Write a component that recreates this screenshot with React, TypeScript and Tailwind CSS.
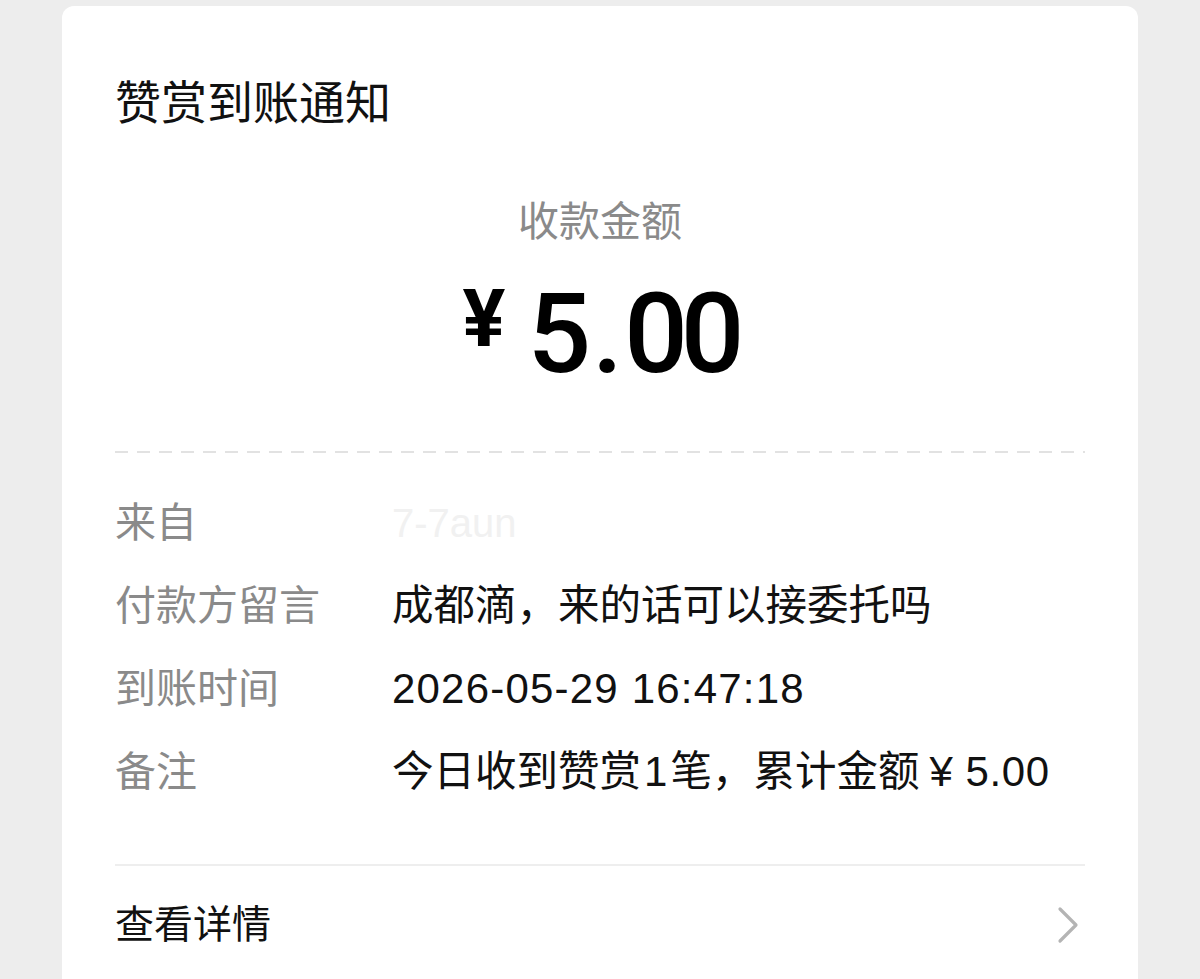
import React from "react";

const cjk = "font-['Liberation_Sans','Noto_Sans_CJK_SC',sans-serif]";

function Row({ label, children }: { label: string; children: React.ReactNode }) {
  return (
    <div className="flex h-[83px] items-center">
      <div className="w-[277px] shrink-0 text-[41px] leading-[50px] text-[#8a8a8a]">{label}</div>
      <div className="text-[41.5px] leading-[50px] text-[#111111] whitespace-nowrap">{children}</div>
    </div>
  );
}

export default function App() {
  return (
    <div className={`min-h-[979px] bg-[#ededed] pt-[6px] px-[62px] ${cjk}`}>
      <div className="min-h-[1000px] rounded-[12px] bg-white px-[53px] pt-[69px] pb-[40px]">
        <div className="h-[56px] text-[46px] leading-[56px] text-[#111111]">赞赏到账通知</div>

        <div className="mt-[67px] text-center text-[41px] leading-[48px] text-[#8a8a8a]">收款金额</div>

        <div className="mt-[32px] flex items-start justify-center text-black">
          <span className="font-['Roboto',sans-serif] text-[80px] font-bold leading-none mt-[1px]">¥</span>
          <span className="ml-[22px] font-['Roboto',sans-serif] text-[112px] font-medium leading-none tracking-[-7px]">
            5<span className="mx-[8px]">.</span>00
          </span>
        </div>

        <div className="mt-[61px] h-[2px] bg-[linear-gradient(to_right,#e2e2e2_13px,transparent_13px)] bg-[length:22px_2px] bg-repeat-x" />

        <div className="mt-[28px] flex flex-col">
          <Row label="来自">
            <span className="font-['Liberation_Sans',sans-serif] text-[40px] text-[#f1f1f1]">7-7aun</span>
          </Row>
          <Row label="付款方留言">成都滴，来的话可以接委托吗</Row>
          <Row label="到账时间">
            <span className="text-[42px] tracking-[1.2px]">2026-05-29 16:47:18</span>
          </Row>
          <Row label="备注">
            今日收到赞赏<span className="px-[3px] text-[42px]">1</span>笔，累计金额<span className="ml-[10px] text-[42px] tracking-[0.6px]">¥ 5.00</span>
          </Row>
        </div>

        <div className="mt-[51px] h-[2px] bg-[#eeeeee]" />

        <div className="flex h-[110px] items-center justify-between pt-[8px]">
          <span className="text-[39px] leading-[50px] text-[#111111]">查看详情</span>
          <svg width="22" height="38" viewBox="0 0 22 38" className="mr-[6px]">
            <polyline points="3,3 19,19 3,35" fill="none" stroke="#b4b4b4" strokeWidth="3.2" strokeLinecap="round" strokeLinejoin="round" />
          </svg>
        </div>
      </div>
    </div>
  );
}
